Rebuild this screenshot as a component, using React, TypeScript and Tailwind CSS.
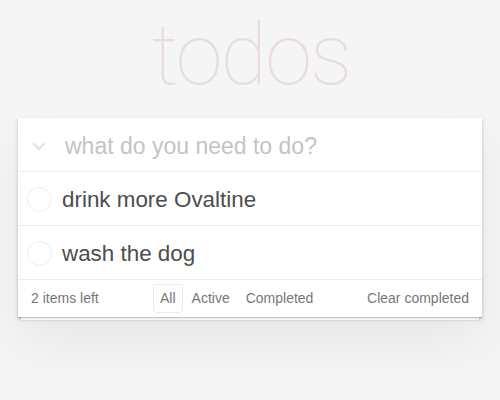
import React, { useState } from 'react';

type Todo = { id: number; title: string; done: boolean };

const initial: Todo[] = [
  { id: 1, title: 'drink more Ovaltine', done: false },
  { id: 2, title: 'wash the dog', done: false },
];

function App() {
  const [todos] = useState<Todo[]>(initial);
  const left = todos.filter((t) => !t.done).length;

  return (
    <div className="min-h-[400px] bg-[#f5f5f5] font-['Liberation_Sans',Arial,sans-serif] text-[#4d4d4d]">
      <div className="flex h-[118px] justify-center">
        <h1 className="mt-[5px] pl-[2px] font-['Roboto',sans-serif] text-[85px] font-thin leading-[100px] tracking-[-2px] text-[#e8dcdc]">
          todos
        </h1>
      </div>

      <section className="mx-[18px] bg-white shadow-[0_2px_4px_rgba(0,0,0,0.2),0_25px_50px_rgba(0,0,0,0.06)]">
        {/* New todo */}
        <div className="flex h-[54px] items-center border-b border-[#ededed]">
          <svg width="16" height="10" viewBox="0 0 16 10" className="ml-[13px] mr-[18px] mt-[2px]">
            <path d="M2 2l6 6 6-6" fill="none" stroke="#e6e6e6" strokeWidth="2.5" />
          </svg>
          <span className="pt-[4px] text-[23px] text-[#c4c4c4]">what do you need to do?</span>
        </div>

        {/* Todo list */}
        {todos.map((t) => (
          <div key={t.id} className="flex h-[54px] items-center border-b border-[#ededed]">
            <span className="ml-[9px] mr-[10px] mt-[1px] h-[25px] w-[25px] rounded-full border border-[#ededed]" />
            <span className="pt-[3px] text-[22.4px] text-[#4d4d4d]">{t.title}</span>
          </div>
        ))}

        {/* Footer */}
        <footer className="relative flex h-[37px] items-center px-[13px] text-[14px] text-[#777] shadow-[0_1px_1px_rgba(0,0,0,0.2),0_6px_0_-3px_#f6f6f6,0_6px_1px_-3px_rgba(0,0,0,0.2)]">
          <span className="w-[122px]">{left} items left</span>
          <div className="flex items-center gap-[2px]">
            <span className="rounded-[3px] border border-[#ececec] px-[6px] py-[3px]">All</span>
            <span className="border border-transparent px-[6px] py-[3px]">Active</span>
            <span className="border border-transparent px-[6px] py-[3px]">Completed</span>
          </div>
          <span className="ml-auto">Clear completed</span>
        </footer>
      </section>
    </div>
  );
}

export default App;
